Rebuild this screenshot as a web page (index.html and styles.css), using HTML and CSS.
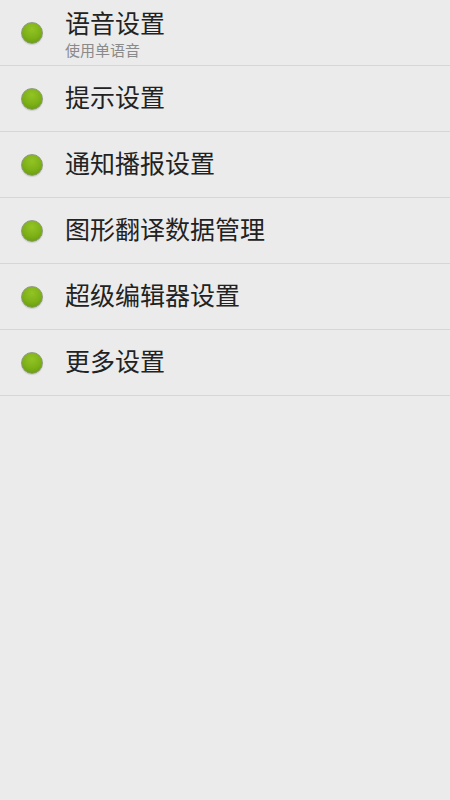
FILE: index.html
```html
<!DOCTYPE html>
<html lang="zh">
<head>
  <meta charset="UTF-8">
  <meta name="viewport" content="width=device-width, initial-scale=1.0">
  <title>设置</title>
  <link rel="stylesheet" href="styles.css">
</head>
<body>
  <ul class="list">
    <li class="item">
      <span class="dot"></span>
      <div class="text">
        <div class="title">语音设置</div>
        <div class="sub">使用单语音</div>
      </div>
    </li>
    <li class="item">
      <span class="dot"></span>
      <div class="text"><div class="title">提示设置</div></div>
    </li>
    <li class="item">
      <span class="dot"></span>
      <div class="text"><div class="title">通知播报设置</div></div>
    </li>
    <li class="item">
      <span class="dot"></span>
      <div class="text"><div class="title">图形翻译数据管理</div></div>
    </li>
    <li class="item">
      <span class="dot"></span>
      <div class="text"><div class="title">超级编辑器设置</div></div>
    </li>
    <li class="item">
      <span class="dot"></span>
      <div class="text"><div class="title">更多设置</div></div>
    </li>
  </ul>
</body>
</html>
```

FILE: styles.css
```css
body {
  margin: 0;
  padding: 0;
  background: #ebebeb;
  font-family: "Noto Sans CJK SC", "Noto Sans", sans-serif;
  min-height: 100vh;
}
.list {
  list-style: none;
  margin: 0;
  padding: 0;
}
.item {
  display: flex;
  align-items: center;
  height: 65px;
  border-bottom: 1px solid #d6d6d6;
}
.dot {
  width: 20px;
  height: 20px;
  margin-left: 21px;
  margin-right: 22px;
  border-radius: 50%;
  border: 1px solid #8f9a7c;
  background: radial-gradient(circle at 50% 30%, #93c425 0%, #7cb016 55%, #5f940d 100%);
  box-shadow: 0 1px 1px rgba(0,0,0,0.12);
  flex-shrink: 0;
}
.text {
  margin-bottom: 5px;
}
.title {
  font-size: 25px;
  line-height: 30px;
  color: #222;
}
.sub {
  font-size: 15px;
  line-height: 17px;
  margin-top: 4px;
  color: #8a8a8a;
}
.item:first-child .text {
  margin-top: 4px;
}
```
